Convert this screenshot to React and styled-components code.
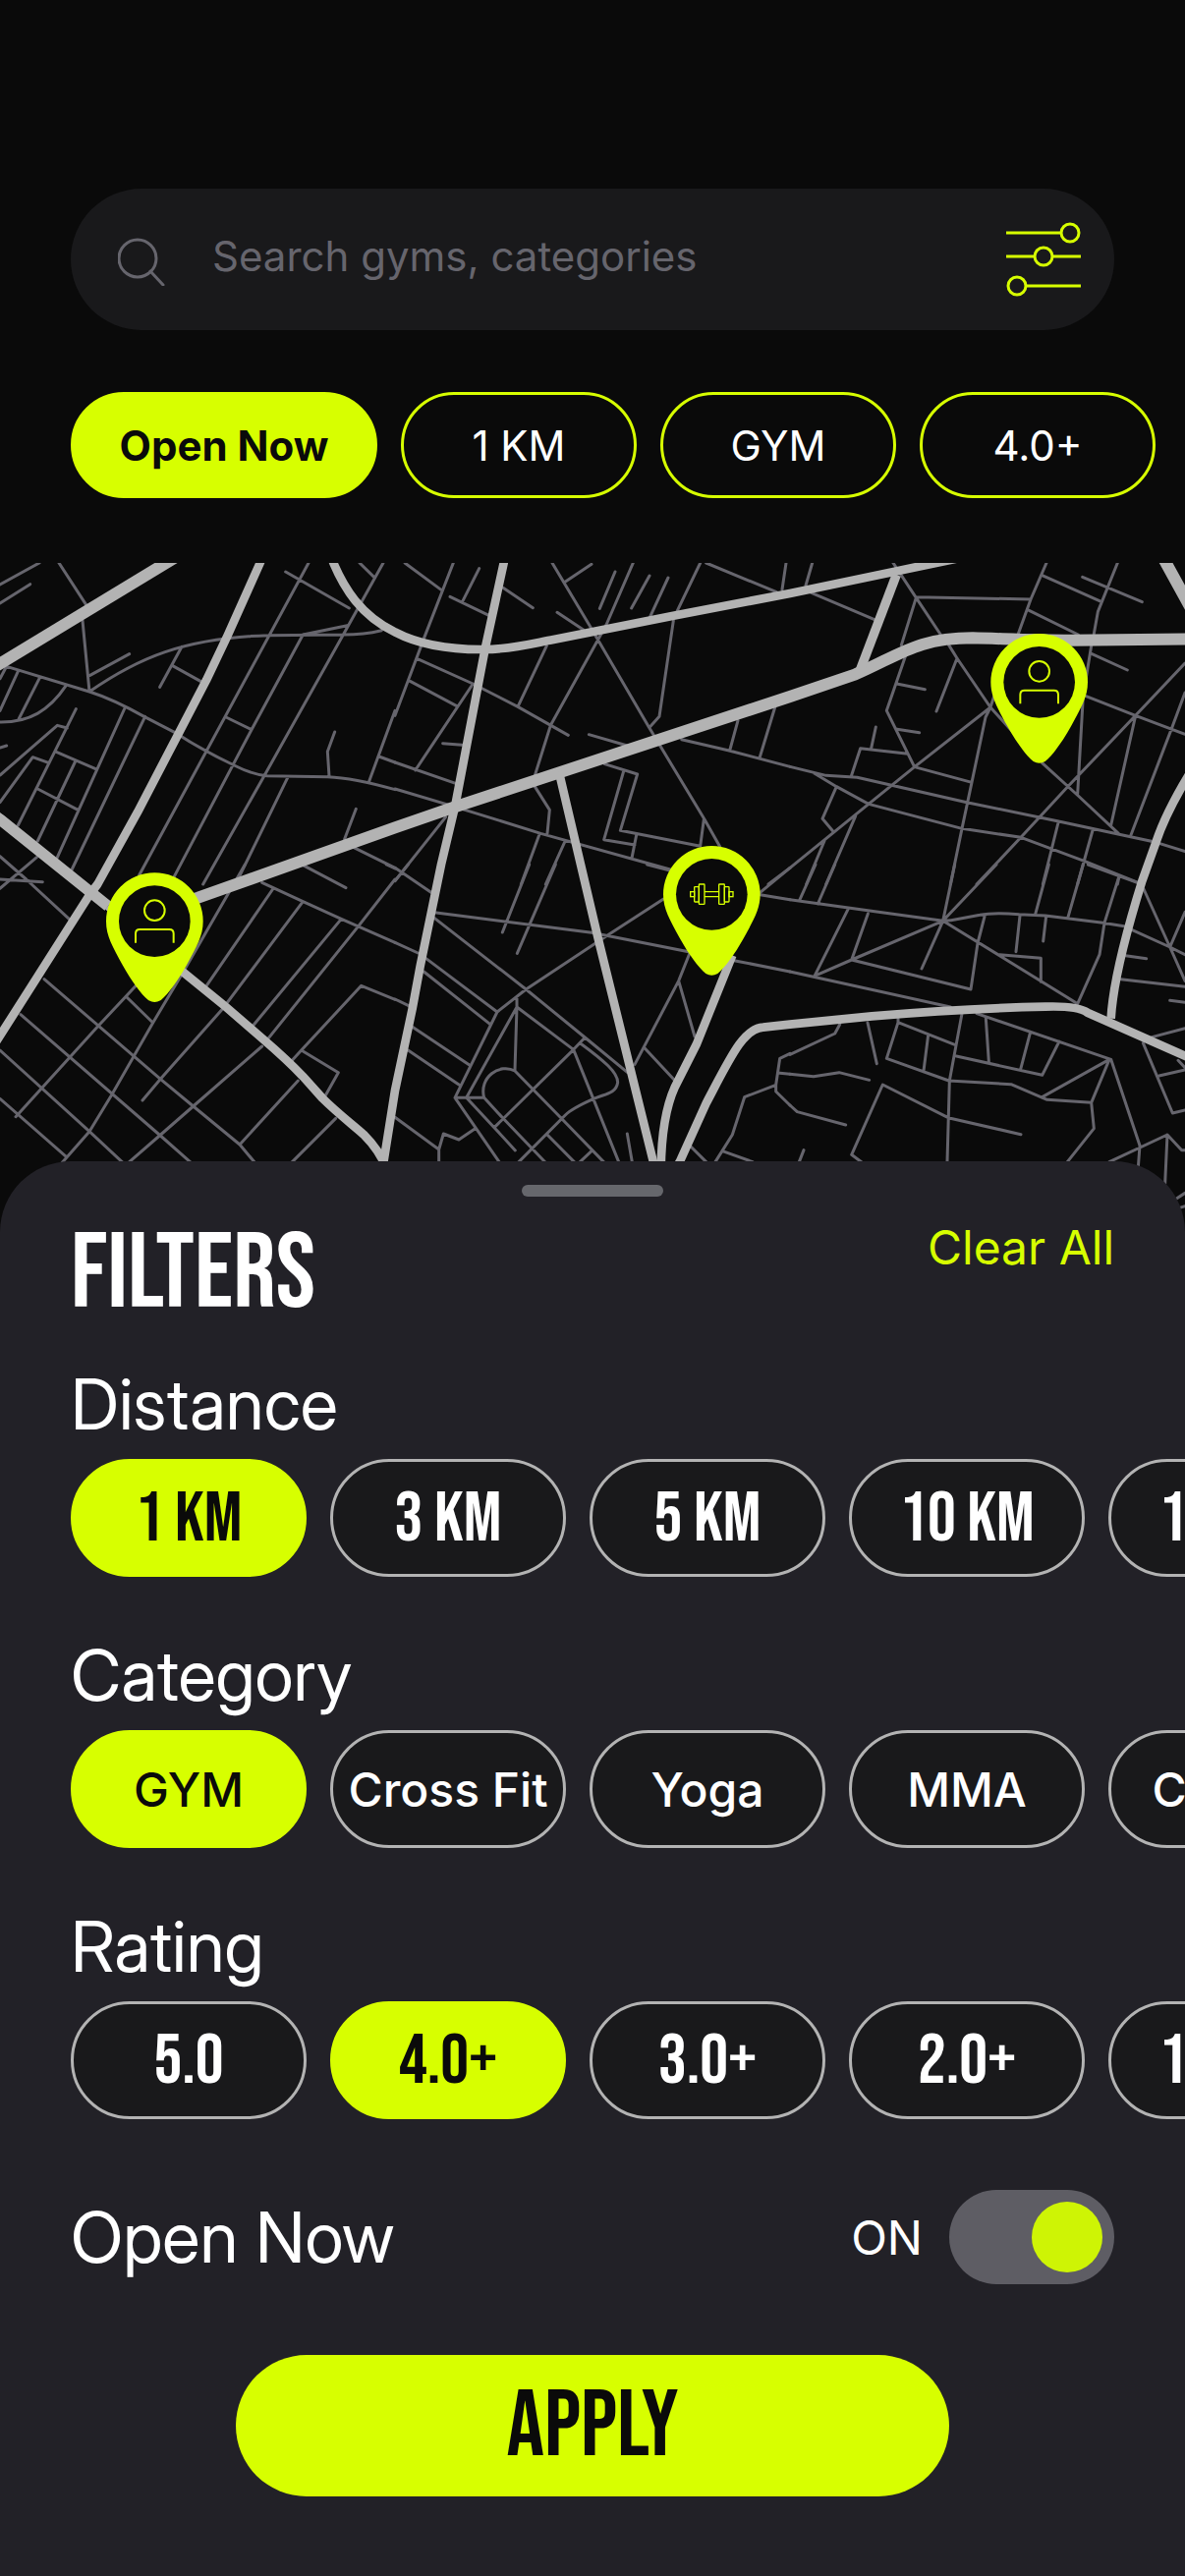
import React, { useState } from "react";
import styled, { createGlobalStyle } from "styled-components";

const LIME = "#d7ff00";
const INK = "#0a0a0a";
const BODY_FONT = `Inter, "Liberation Sans", sans-serif`;
const LABEL_FONT = `"Inter Display", "Inter Tight", Inter, "Liberation Sans", sans-serif`;
const DISPLAY_FONT = `"Bebas Neue", "Liberation Sans Narrow", "DejaVu Sans Condensed", sans-serif`;

const GlobalStyle = createGlobalStyle`
  * {
    box-sizing: border-box;
  }
  body {
    margin: 0;
    background: ${INK};
    color: #fff;
    font-family: ${BODY_FONT};
  }
  button, input {
    font: inherit;
    color: inherit;
  }
  h1, h2 {
    margin: 0;
    font-weight: 400;
  }
`;

const Page = styled.main`
  display: flex;
  flex-direction: column;
  min-height: 100vh;
  overflow-x: hidden;
`;

const Header = styled.header`
  display: flex;
  flex-direction: column;
  gap: 63px;
  padding: 192px 0 66px 72px;
`;

const SearchBar = styled.label`
  display: flex;
  align-items: center;
  gap: 48px;
  height: 144px;
  margin-right: 72px;
  padding: 0 34px 0 48px;
  border-radius: 72px;
  background: #19191b;
`;

const SearchInput = styled.input`
  flex: 1;
  min-width: 0;
  padding: 0 0 6px;
  border: 0;
  outline: 0;
  background: none;
  font-size: 42px;
  line-height: 54px;
  &::placeholder {
    color: #66656d;
    opacity: 1;
  }
`;

const IconButton = styled.button`
  display: flex;
  padding: 0;
  border: 0;
  background: none;
  cursor: pointer;
`;

const ChipRow = styled.div`
  display: flex;
  gap: 24px;
  overflow: hidden;
`;

const QuickChip = styled.button`
  flex: none;
  width: ${(p) => (p.$active ? 312 : 240)}px;
  height: 108px;
  padding: 0;
  border: 3px solid ${LIME};
  border-radius: 54px;
  background: ${(p) => (p.$active ? LIME : "transparent")};
  color: ${(p) => (p.$active ? INK : "#fff")};
  font-size: 42px;
  font-weight: ${(p) => (p.$active ? 700 : 400)};
  cursor: pointer;
`;

const MapArea = styled.section`
  height: 681px;
  svg {
    display: block;
    width: 100%;
    height: 100%;
  }
`;

const Sheet = styled.section`
  position: relative;
  flex: 1;
  display: flex;
  flex-direction: column;
  margin-top: -72px;
  padding: 24px 0 81px 72px;
  border-radius: 72px 72px 0 0;
  background: #222127;
`;

const Handle = styled.div`
  align-self: center;
  width: 144px;
  height: 12px;
  margin-right: 72px;
  border-radius: 6px;
  background: #66676c;
`;

const SheetHeader = styled.div`
  display: flex;
  justify-content: space-between;
  align-items: flex-start;
  height: 171px;
  padding: 24px 72px 0 0;
`;

const Title = styled.h1`
  font-family: ${DISPLAY_FONT};
  font-size: 108px;
  line-height: 112px;
`;

const ClearButton = styled.button`
  padding: 0;
  border: 0;
  background: none;
  color: ${LIME};
  font-size: 48px;
  line-height: 56px;
  cursor: pointer;
`;

const FilterGroup = styled.div`
  display: flex;
  flex-direction: column;
  gap: 16px;
  margin-bottom: 60px;
`;

const Label = styled.h2`
  font-family: ${LABEL_FONT};
  font-size: 71px;
  line-height: 80px;
`;

const FilterChip = styled.button`
  flex: none;
  width: 240px;
  height: 120px;
  padding: ${(p) => (p.$display ? 3 : 0)}px 0 0;
  border: 3px solid ${(p) => (p.$active ? LIME : "#b3b3b3")};
  border-radius: 60px;
  background: ${(p) => (p.$active ? LIME : "#19191b")};
  color: ${(p) => (p.$active ? INK : "#fff")};
  font-family: ${(p) => (p.$display ? DISPLAY_FONT : BODY_FONT)};
  font-size: ${(p) => (p.$display ? 72 : 48)}px;
  font-weight: ${(p) => (p.$display ? 400 : 500)};
  white-space: nowrap;
  cursor: pointer;
`;

const ToggleRow = styled.label`
  display: flex;
  align-items: center;
  gap: 27px;
  height: 96px;
  margin: 12px 72px 72px 0;
  h2 {
    margin-right: auto;
  }
`;

const ToggleState = styled.span`
  font-size: 48px;
`;

const Toggle = styled.input`
  appearance: none;
  display: flex;
  justify-content: ${(p) => (p.checked ? "flex-end" : "flex-start")};
  width: 168px;
  height: 96px;
  margin: 0;
  padding: 12px;
  border-radius: 48px;
  background: #5e5d64;
  cursor: pointer;
  &::before {
    content: "";
    width: 72px;
    height: 72px;
    border-radius: 50%;
    background: ${(p) => (p.checked ? "#cef405" : "#b3b3b3")};
  }
`;

const ApplyButton = styled.button`
  height: 144px;
  margin: 0 240px 0 168px;
  padding: 3px 0 0;
  border: 0;
  border-radius: 72px;
  background: ${LIME};
  color: ${INK};
  font-family: ${DISPLAY_FONT};
  font-size: 96px;
  cursor: pointer;
`;

const SearchIcon = () => (
  <svg width="48" height="54" viewBox="0 0 48 54" fill="none" stroke="#66656d" strokeWidth="3" strokeLinecap="round">
    <circle cx="20" cy="26" r="19" />
    <path d="M33 39L46 53" />
  </svg>
);

const SlidersIcon = () => (
  <svg width="76" height="76" viewBox="0 0 76 76" fill="none" stroke={LIME} strokeWidth="3">
    <circle cx="65" cy="11" r="9" />
    <circle cx="38" cy="35" r="9" />
    <circle cx="11" cy="65" r="9" />
    <path d="M0 11H56M0 35H29M47 35H76M20 65H76" />
  </svg>
);

// side streets, one block of the city per entry
const STREETS = [
  {
    x: 0,
    y: -39,
    d: `M0,105L120,39M0,162L92,104M180,39L265,170M252,215L273,432M275,382L395,317
    M20,355L273,432Q345,455 440,508L540,560Q620,612 715,657Q770,685 815,689L1000,692Q1080,695 1206,731
    M273,432C420,330 560,268 820,260L1050,258Q1110,258 1165,245M925,258L1060,230
    M20,355L0,392M55,370L0,490M122,388L57,516M202,413C150,490 90,526 0,525
    M232,485L55,840M205,543L175,535L0,687M150,650L100,632L0,770M172,616L292,668M230,645L115,888
    M115,729L238,793M382,480L175,938M443,508L218,978M0,603L20,597M555,295L488,418M527,353L612,400
    M942,39L425,992M925,258L768,548L530,1000M690,510L768,548M1170,39L1048,258L805,692L620,1020
    M872,66L1066,177M1098,39L1142,82M1206,490L1127,706M1157,630L1206,648M1022,555L1000,615L1005,690
    M878,695L730,998M1087,790L1052,882M1080,908L1206,970M925,962L1056,1031`,
  },
  {
    x: 1206,
    y: -39,
    d: `M30,39L142,122M178,39L90,265L40,398L0,505M168,142L288,200M257,56L207,155M330,115L421,176
    M480,39L600,240L775,540L945,822L992,905M517,98L600,43M495,190L575,243M672,66L625,178
    M727,39L645,228L475,535L427,688M777,78L722,177M834,84L778,205M932,39L862,185M850,215L807,508L778,540
    M950,39L1165,128M1194,39L1182,120M67,331L238,408L375,478L529,565M42,398L187,475M238,408L62,672
    M463,292L375,478M146,590L205,595M0,648L185,712M0,729L165,778L445,865L840,975
    M592,563L720,600M640,653L740,684L688,856L932,904L943,822M698,675L638,884L732,900M737,870L723,940
    M427,722L472,793L465,865M442,865L385,1020M520,887L460,1020M155,815L0,1010
    M875,578L1020,612L1206,661M1047,520L1022,612M1160,480L1113,635M1206,970L1140,1020`,
  },
  {
    x: 2412,
    y: -39,
    d: `M68,39L48,108M65,130L258,212M315,39L385,145L460,258M485,290L510,330L612,480L680,555
    M770,650L880,750L1003,865M385,143L735,150M385,145L340,290M352,325L295,490L380,662L555,709
    M330,409L412,425M327,547L395,557M510,330L447,492M783,39L735,150L697,255M770,77L950,157
    M1000,39L940,188L928,255M893,82L1075,158M730,184L880,258M920,292L895,445L878,745M922,317L1030,366
    M625,440L612,480L597,510L555,709L525,850L490,1020M612,480L380,662L240,775L0,970M902,445L1055,505L1206,562
    M1206,345L1055,505L850,720L705,877L570,1020M1055,505L980,840M1206,435L1165,545L1040,872
    M262,540L248,605M187,690L215,605L360,622
    M0,661L110,688L205,694L540,770L820,828L1040,875L1110,890L1206,920
    M75,682L142,722L240,775L525,850L705,877L900,950L1070,1018M142,722L99,820L133,860
    M200,812L110,1020M105,888L50,1020M820,828L772,1020M925,852L878,1020M1005,995L1000,1020`,
  },
  {
    x: 0,
    y: 921,
    d: `M0,-25L80,45L215,170M0,45L130,53M112,-22L0,73M135,350L490,655L590,738L732,855L778,910
    M63,458L490,828L583,910M0,567L273,815L375,910M0,715L203,893M415,370L300,493L48,770M387,405L467,483
    M748,0L555,335L467,483L340,705L273,815L190,910M800,55L925,113L1042,166L1206,238M835,72L632,368
    M925,113L680,440L490,655L435,720M1042,166L770,495M1206,45L1095,187L820,530M800,555L590,738L487,828L395,908
    M1206,412L1103,370L920,567L890,600M920,567L1033,635L990,712M910,660L732,855M1025,775L890,910
    M1180,0L1206,12`,
  },
  {
    x: 1206,
    y: 921,
    d: `M0,10L110,85M0,50L40,0M410,0L328,207M490,0L373,271M120,146L600,208L900,267
    M120,163L400,381L580,528L710,635M0,238L70,270M95,287L312,450M88,327L290,487M0,411L40,430
    M52,495L226,611M40,567L195,672M820,105L650,215L400,381L312,450L183,712L318,908
    M372,403V435L218,712L303,803L367,873M183,712H272L330,775L458,908M372,435L366,628
    M372,435L545,565L580,528M545,565L683,908M545,565L303,803
    M272,712C255,650 320,605 366,630L510,777L637,908M565,545C640,600 680,635 680,665C675,700 640,700 605,716Q540,745 520,765L378,908
    M465,825L547,908M600,875L565,908M0,772L134,870V908M134,870L148,822L195,840L247,805
    M900,270L866,355L732,610M866,355L915,525M762,560L855,660M709,822L724,908M900,858L950,908
    M978,908L1030,825L1067,710L1163,673L1175,592L1206,577M1175,637L1206,640M1163,673V693L1206,735
    M1000,875L1092,908M770,0L840,18M1115,85L1206,10M1115,92L1206,107M1035,293L1206,327`,
  },
  {
    x: 2412,
    y: 921,
    d: `M0,107L270,145L467,172M78,0L30,107M137,0L85,120M177,137L75,340M238,150L188,291
    M467,172L188,291L75,340M188,291L552,381L573,240L595,155M467,172L402,318M503,0L467,172L630,0
    M467,172Q490,172 520,165L580,154Q620,145 700,152L780,156L955,178L1020,188M1045,200L1160,252L1206,275
    M790,0L749,152M895,0L849,160M1005,35L960,178L945,275L878,425L640,278L467,172M910,0L1060,55
    M1080,75L1160,252L1206,355M1206,145L1160,252M702,156L690,266M782,158L773,234M640,275L766,286V358
    M0,327L490,435M570,455L980,595L1068,858L1063,925M525,455L487,660L480,908M330,470V482L503,550
    M330,482L295,592L485,660L675,671L785,718L920,727L928,806L845,910M422,520L408,630
    M508,585L770,643L822,540M598,470L607,602M733,515L704,625M770,710L975,595L920,727
    M152,488L137,516L0,580M237,483L265,608M0,640L72,647L150,635L242,658M0,735L22,755L170,795
    M28,908L42,872M218,908L188,886L283,672L483,773L705,824M975,908L1152,825L1196,872H1206
    M1152,825L1145,975M1180,1020L1206,1003M1190,1048L1206,1043M1025,278L1088,287M1010,350L1206,373
    M1160,415L1206,421M1105,527L1206,500M1078,545L1168,759L1206,750M1127,645L1206,627M1185,598L1206,620`,
  },
];

const ROADS = [
  { w: 36, d: "M540,-20L-30,326" },
  { w: 26, d: "M803,-20L794,0L695,221L630,358L545,521L420,761L298,981L275,1011L-20,1475" },
  { w: 34, d: "M-20,768L0,783L330,1048" },
  { w: 26, d: "M330,1048L555,1246L690,1356L800,1451Q880,1520 925,1568L985,1635C1030,1680 1080,1718 1110,1745Q1160,1795 1180,1850" },
  { w: 36, d: "M470,1066L605,1022L1206,808L1386,746L2412,408L2612,340C2750,280 2800,229 2970,229C3060,231 3150,236 3270,236L3640,232" },
  { w: 26, d: "M1010,-20L1018,0C1050,75 1100,160 1206,211C1290,255 1390,265 1480,264C1560,264 1630,245 1690,234L2056,161L2412,93L2732,26L2930,-15" },
  { w: 26, d: "M1541,-20L1538,0L1481,262L1390,740L1347,921L1283,1231L1259,1361L1206,1611L1168,1850" },
  { w: 26, d: "M1706,636L1773,921L1826,1146L2000,1850" },
  { w: 26, d: "M2236,1198L2126,1471L2060,1601Q2020,1690 2018,1850" },
  { w: 26, d: "M2062,1850L2076,1827L2156,1650C2230,1510 2270,1421 2330,1418L2412,1409L2662,1384Q2950,1360 3192,1355Q3290,1352 3320,1373L3640,1515" },
  { w: 26, d: "M3640,630Q3560,760 3530,851L3487,971Q3400,1250 3392,1391" },
  { w: 36, d: "M3548,-20L3560,0L3640,146" },
  { w: 28, d: "M2737,36L2625,330" },
];

const PersonGlyph = () => (
  <g fill="none" stroke={LIME} strokeWidth="6">
    <circle cy="-33" r="31" />
    <path d="M-58,66V38Q-58,25 -45,25H45Q58,25 58,38V66" />
  </g>
);

const DumbbellGlyph = () => (
  <g fill="none" stroke={LIME} strokeWidth="4">
    <path d="M-22,-8H22M-22,7H22" />
    <rect x="-39" y="-31" width="17" height="61" rx="2" />
    <rect x="-53" y="-23" width="14" height="46" rx="2" />
    <rect x="-65" y="-8" width="12" height="15" />
    <rect x="22" y="-31" width="17" height="61" rx="2" />
    <rect x="39" y="-23" width="14" height="46" rx="2" />
    <rect x="53" y="-8" width="12" height="15" />
  </g>
);

const Pin = ({ x, y, children }) => (
  <g transform={`translate(${x} ${y})`}>
    <path
      fill={LIME}
      d="M-148,0A148,148 0 0 1 148,0C148,45 128,78 97,135C70,183 42,222 18,242Q0,252 -18,242C-42,222 -70,183 -97,135C-128,78 -148,45 -148,0Z"
    />
    <circle r="109" fill={INK} />
    {children}
  </g>
);

const GymMap = () => (
  <MapArea aria-label="Gyms nearby">
    <svg viewBox="0 0 3618 2043" preserveAspectRatio="xMidYMin slice">
      <g fill="none" stroke="#66656d" strokeWidth="9" strokeLinecap="round" strokeLinejoin="round">
        {STREETS.map(({ x, y, d }) => (
          <path key={`${x},${y}`} transform={`translate(${x} ${y})`} d={d} />
        ))}
      </g>
      <g fill="none" stroke="#b3b3b3" strokeLinejoin="round">
        {ROADS.map(({ w, d }) => (
          <path key={d} strokeWidth={w} d={d} />
        ))}
      </g>
      <Pin x={472} y={1094}>
        <PersonGlyph />
      </Pin>
      <Pin x={3173} y={364}>
        <PersonGlyph />
      </Pin>
      <Pin x={2173} y={1012}>
        <DumbbellGlyph />
      </Pin>
    </svg>
  </MapArea>
);

const QUICK_FILTERS = ["Open Now", "1 KM", "GYM", "4.0+"];

const GROUPS = [
  { name: "Distance", display: true, options: ["1 KM", "3 KM", "5 KM", "10 KM", "15 KM"] },
  { name: "Category", display: false, options: ["GYM", "Cross Fit", "Yoga", "MMA", "Cardio"] },
  { name: "Rating", display: true, options: ["5.0", "4.0+", "3.0+", "2.0+", "15 KM"] },
];

const DEFAULTS = { Distance: "1 KM", Category: "GYM", Rating: "4.0+" };

const App = () => {
  const [quick, setQuick] = useState("Open Now");
  const [selected, setSelected] = useState(DEFAULTS);
  const [openNow, setOpenNow] = useState(true);

  const clearAll = () => {
    setSelected({});
    setOpenNow(false);
  };

  return (
    <Page>
      <GlobalStyle />
      <Header>
        <SearchBar>
          <SearchIcon />
          <SearchInput type="text" placeholder="Search gyms, categories" />
          <IconButton type="button" aria-label="Filters">
            <SlidersIcon />
          </IconButton>
        </SearchBar>
        <ChipRow>
          {QUICK_FILTERS.map((name) => (
            <QuickChip key={name} $active={quick === name} onClick={() => setQuick(name)}>
              {name}
            </QuickChip>
          ))}
        </ChipRow>
      </Header>

      <GymMap />

      <Sheet>
        <Handle />
        <SheetHeader>
          <Title>FILTERS</Title>
          <ClearButton onClick={clearAll}>Clear All</ClearButton>
        </SheetHeader>

        {GROUPS.map(({ name, display, options }) => (
          <FilterGroup key={name}>
            <Label>{name}</Label>
            <ChipRow>
              {options.map((option) => (
                <FilterChip
                  key={option}
                  $display={display}
                  $active={selected[name] === option}
                  onClick={() => setSelected({ ...selected, [name]: option })}
                >
                  {option}
                </FilterChip>
              ))}
            </ChipRow>
          </FilterGroup>
        ))}

        <ToggleRow>
          <Label>Open Now</Label>
          <ToggleState>{openNow ? "ON" : "OFF"}</ToggleState>
          <Toggle type="checkbox" checked={openNow} onChange={(e) => setOpenNow(e.target.checked)} />
        </ToggleRow>

        <ApplyButton>APPLY</ApplyButton>
      </Sheet>
    </Page>
  );
};

export default App;
